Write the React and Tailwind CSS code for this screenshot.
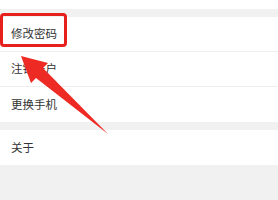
import React from 'react';

const font = { fontFamily: '"Noto Sans CJK SC", "Noto Sans", sans-serif' };

function Row({ label, border }) {
  return (
    <div className={`h-[35px] bg-white flex items-center pl-[11px] ${border ? 'border-b border-[#eeeeee]' : ''}`}>
      <span className="text-[11.5px] text-[#333333] leading-none">{label}</span>
    </div>
  );
}

export default function App() {
  return (
    <div className="relative w-[278px] h-[200px] bg-[#f1f1f1] overflow-hidden" style={font}>
      <div className="h-[9px] bg-white" />
      <div className="h-[8px]" />
      <Row label="修改密码" border />
      <Row label="注销账户" border />
      <Row label="更换手机" />
      <div className="h-[8px]" />
      <Row label="关于" />

      {/* highlight box */}
      <div className="absolute left-0 top-[13px] w-[67px] h-[34px] border-[3px] border-[#e5201d] rounded-[4px]" />

      {/* arrow */}
      <svg className="absolute left-0 top-0" width="278" height="200" viewBox="0 0 278 200">
        <polygon
          points="21,56 48,63 43,68 108,134 36,78 31,83"
          fill="#ee2a24"
        />
      </svg>
    </div>
  );
}
